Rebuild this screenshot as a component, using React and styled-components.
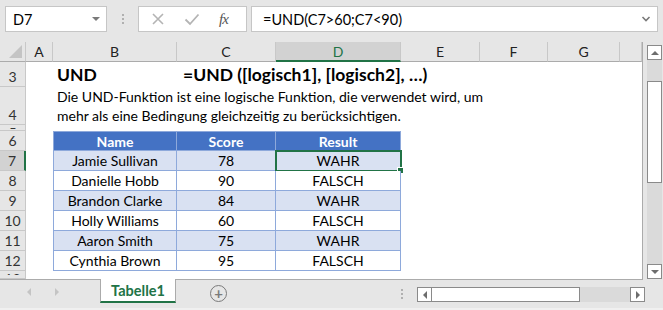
import React from "react";
import styled, { createGlobalStyle } from "styled-components";

const GlobalStyle = createGlobalStyle`
  html, body { margin: 0; padding: 0; background: #e6e6e6; }
  body { font-family: Lato, "Open Sans", sans-serif; }
`;

const GREEN = "#217346";
const TABLE_LINE = "#8ea9db";

const Window = styled.div`
  width: 663px;
  height: 310px;
  background: #e6e6e6;
  display: flex;
  flex-direction: column;
  overflow: hidden;
`;

// ---------- formula bar ----------
const FormulaBar = styled.div`
  height: 42px;
  box-sizing: border-box;
  padding: 6px 5px 10px 5px;
  display: flex;
  align-items: stretch;
`;

const NameBox = styled.div`
  width: 102px;
  box-sizing: border-box;
  background: #fff;
  border: 1px solid #c6c6c6;
  display: flex;
  align-items: center;
  justify-content: space-between;
  padding: 0 6px 0 7px;
  font-size: 14.5px;
  color: #000;
`;

const DownTri = styled.span`
  width: 0;
  height: 0;
  border-left: 4px solid transparent;
  border-right: 4px solid transparent;
  border-top: 4px solid #7a7a7a;
`;

const Grip = styled.div`
  width: 31px;
  display: flex;
  flex-direction: column;
  align-items: center;
  justify-content: center;
  gap: 2px;
  span {
    width: 2px;
    height: 2px;
    background: #b0b0b0;
  }
`;

const FxBox = styled.div`
  width: 109px;
  box-sizing: border-box;
  background: #fff;
  border: 1px solid #c6c6c6;
  display: flex;
  align-items: center;
  padding: 0 0 0 12px;
  gap: 19px;
  margin-right: 4px;
`;

const FxLabel = styled.span`
  font-family: "Liberation Serif", serif;
  font-style: italic;
  font-size: 15px;
  color: #555;
  letter-spacing: -1px;
`;

const FormulaInput = styled.div`
  flex: 1;
  background: #fff;
  border: 1px solid #c6c6c6;
  display: flex;
  align-items: center;
  justify-content: space-between;
  padding: 0 6px 0 11px;
  font-size: 14.5px;
  color: #000;
`;

// ---------- grid ----------
const Main = styled.div`
  display: flex;
  height: 238px;
`;

const Sheet = styled.div`
  width: 642px;
  display: grid;
  grid-template-columns: 26px 27px 124px 99px 125px 79px 68px 72px 1fr;
  grid-template-rows: 20px 25px 38px 6px repeat(7, 20px) 1fr;
  background: #fff;
  border-right: 1px solid #ababab;
  border-bottom: 1px solid #ababab;
  font-size: 14px;
`;

const Corner = styled.div`
  background: #e6e6e6;
  border-right: 1px solid #c8c8c8;
  border-bottom: 1px solid #ababab;
  position: relative;
  &::after {
    content: "";
    position: absolute;
    right: 3px;
    bottom: 3px;
    border-left: 13px solid transparent;
    border-bottom: 13px solid #c4c4c4;
  }
`;

const ColHead = styled.div`
  background: ${(p) => (p.$active ? "#d2d2d2" : "#e6e6e6")};
  color: ${(p) => (p.$active ? GREEN : "#222")};
  border-right: 1px solid #c8c8c8;
  border-bottom: ${(p) => (p.$active ? `2px solid ${GREEN}` : "1px solid #ababab")};
  display: flex;
  align-items: center;
  justify-content: center;
  font-size: 14px;
`;

const RowHead = styled.div`
  grid-column: 1;
  background: ${(p) => (p.$active ? "#d2d2d2" : "#e6e6e6")};
  border-right: ${(p) => (p.$active ? `2px solid ${GREEN}` : "1px solid #c8c8c8")};
  border-bottom: 1px solid #c8c8c8;
  color: #333;
  font-size: 14px;
  display: flex;
  justify-content: center;
  align-items: ${(p) => (p.$clip ? "flex-start" : "flex-end")};
  overflow: hidden;
  span {
    display: block;
    line-height: 16px;
    padding-bottom: ${(p) => (p.$clip ? "0" : "1px")};
    height: ${(p) => (p.$clip ? "4px" : "auto")};
    overflow: hidden;
  }
`;

const Title = styled.div`
  grid-row: 2;
  grid-column: ${(p) => p.$col};
  font-weight: 700;
  font-size: 17.5px;
  padding-left: ${(p) => p.$pad}px;
  white-space: nowrap;
  display: flex;
  align-items: center;
  color: #000;
`;

const Description = styled.div`
  grid-row: 3;
  grid-column: 3 / 8;
  padding-left: 4px;
  line-height: 19px;
  white-space: nowrap;
  color: #000;
`;

const TCell = styled.div`
  grid-row: ${(p) => p.$row};
  grid-column: ${(p) => p.$col};
  background: ${(p) => (p.$head ? "#4472c4" : p.$band ? "#d9e1f2" : "#fff")};
  color: ${(p) => (p.$head ? "#fff" : "#000")};
  font-weight: ${(p) => (p.$head ? 700 : 400)};
  border-top: ${(p) => (p.$head ? `1px solid ${TABLE_LINE}` : "none")};
  border-right: 1px solid ${TABLE_LINE};
  border-bottom: 1px solid ${TABLE_LINE};
  border-left: ${(p) => (p.$first ? `1px solid ${TABLE_LINE}` : "none")};
  display: flex;
  align-items: center;
  justify-content: center;
  position: relative;
  white-space: nowrap;
  ${(p) =>
    p.$selected &&
    `
    outline: 2px solid ${GREEN};
    outline-offset: -1px;
    &::after {
      content: "";
      position: absolute;
      right: -4px;
      bottom: -4px;
      width: 5px;
      height: 5px;
      background: ${GREEN};
      border: 1px solid #fff;
    }
  `}
`;

// ---------- scrollbars ----------
const VScrollCol = styled.div`
  flex: 1;
  display: flex;
  justify-content: center;
  padding: 3px 0 0 3px;
`;

const VTrack = styled.div`
  width: 15px;
  height: 234px;
  background: #dadada;
  display: flex;
  flex-direction: column;
  justify-content: space-between;
`;

const ScrollBtn = styled.div`
  width: 15px;
  height: 15px;
  box-sizing: border-box;
  background: #fff;
  border: 1px solid #8a8a8a;
  display: flex;
  align-items: center;
  justify-content: center;
`;

const Tri = styled.span`
  width: 0;
  height: 0;
  ${(p) =>
    p.$dir === "up"
      ? "border-left: 4px solid transparent; border-right: 4px solid transparent; border-bottom: 4px solid #6d6d6d;"
      : p.$dir === "down"
      ? "border-left: 4px solid transparent; border-right: 4px solid transparent; border-top: 4px solid #6d6d6d;"
      : p.$dir === "left"
      ? `border-top: 4px solid transparent; border-bottom: 4px solid transparent; border-right: 4px solid ${p.$color || "#6d6d6d"};`
      : `border-top: 4px solid transparent; border-bottom: 4px solid transparent; border-left: 4px solid ${p.$color || "#6d6d6d"};`}
`;

const VThumbArea = styled.div`
  flex: 1;
  padding-top: 21px;
`;

const VThumb = styled.div`
  height: 102px;
  background: #fff;
  border: 1px solid #8a8a8a;
  box-sizing: border-box;
`;

// ---------- sheet tabs ----------
const TabBar = styled.div`
  height: 30px;
  display: flex;
  align-items: flex-start;
  border-bottom: 2px solid #f0f0f0;
  box-sizing: border-box;
`;

const TabNav = styled.div`
  width: 100px;
  height: 24px;
  display: flex;
  align-items: center;
  gap: 24px;
  padding-left: 27px;
  box-sizing: border-box;
`;

const Tab = styled.div`
  width: 76px;
  height: 24px;
  box-sizing: border-box;
  background: #fff;
  border-left: 1px solid #ababab;
  border-right: 1px solid #ababab;
  border-bottom: 2px solid ${GREEN};
  margin-top: -1px;
  color: ${GREEN};
  font-weight: 700;
  font-size: 14.5px;
  display: flex;
  align-items: center;
  justify-content: center;
`;

const AddSheet = styled.div`
  width: 15px;
  height: 15px;
  margin: 5px 0 0 34px;
  border: 1.5px solid #7a7a7a;
  border-radius: 50%;
  display: flex;
  align-items: center;
  justify-content: center;
  color: #7a7a7a;
  font-size: 15px;
  line-height: 1;
  font-weight: 700;
`;

const BarGrip = styled(Grip)`
  width: auto;
  height: 14px;
  margin: 7px 0 0 174px;
`;

const HTrack = styled.div`
  width: 228px;
  height: 15px;
  margin: 7px 0 0 14px;
  background: #dadada;
  display: flex;
`;

const HThumb = styled.div`
  width: 148px;
  background: #fff;
  border: 1px solid #8a8a8a;
  border-left: none;
  box-sizing: border-box;
  margin-right: auto;
`;

const rows = [
  ["Jamie Sullivan", 78, "WAHR"],
  ["Danielle Hobb", 90, "FALSCH"],
  ["Brandon Clarke", 84, "WAHR"],
  ["Holly Williams", 60, "FALSCH"],
  ["Aaron Smith", 75, "WAHR"],
  ["Cynthia Brown", 95, "FALSCH"],
];

const cols = ["A", "B", "C", "D", "E", "F", "G", ""];

export default function App() {
  return (
    <>
      <GlobalStyle />
      <Window>
        <FormulaBar>
          <NameBox>
            D7
            <DownTri />
          </NameBox>
          <Grip>
            <span />
            <span />
            <span />
          </Grip>
          <FxBox>
            <svg width="14" height="14" viewBox="0 0 14 14">
              <path d="M2 2 L12 12 M12 2 L2 12" stroke="#b4b4b4" strokeWidth="1.6" />
            </svg>
            <svg width="16" height="14" viewBox="0 0 16 14">
              <path d="M1.5 7.5 L6 12 L14.5 2.5" stroke="#b4b4b4" strokeWidth="1.8" fill="none" />
            </svg>
            <FxLabel>fx</FxLabel>
          </FxBox>
          <FormulaInput>
            =UND(C7&gt;60;C7&lt;90)
            <svg width="10" height="8" viewBox="0 0 10 8">
              <path d="M1.5 2 L5 5.5 L8.5 2" stroke="#7a7a7a" strokeWidth="1.6" fill="none" />
            </svg>
          </FormulaInput>
        </FormulaBar>

        <Main>
          <Sheet>
            <Corner />
            {cols.map((c, i) => (
              <ColHead key={i} $active={c === "D"}>
                {c}
              </ColHead>
            ))}

            <RowHead style={{ gridRow: 2 }}><span>3</span></RowHead>
            <RowHead style={{ gridRow: 3 }}><span>4</span></RowHead>
            <RowHead style={{ gridRow: 4 }} $clip><span>5</span></RowHead>
            {[6, 7, 8, 9, 10, 11, 12].map((n, i) => (
              <RowHead key={n} style={{ gridRow: 5 + i }} $active={n === 7}>
                <span>{n}</span>
              </RowHead>
            ))}
            <RowHead style={{ gridRow: 12 }} $clip><span>13</span></RowHead>

            <Title $col={3} $pad={4}>UND</Title>
            <Title $col={4} $pad={6}>=UND ([logisch1], [logisch2], …)</Title>
            <Description>
              Die UND-Funktion ist eine logische Funktion, die verwendet wird, um
              <br />
              mehr als eine Bedingung gleichzeitig zu berücksichtigen.
            </Description>

            <TCell $row={5} $col={3} $head $first>Name</TCell>
            <TCell $row={5} $col={4} $head>Score</TCell>
            <TCell $row={5} $col={5} $head>Result</TCell>
            {rows.map(([name, score, res], i) => (
              <React.Fragment key={name}>
                <TCell $row={6 + i} $col={3} $first $band={i % 2 === 0}>{name}</TCell>
                <TCell $row={6 + i} $col={4} $band={i % 2 === 0}>{score}</TCell>
                <TCell $row={6 + i} $col={5} $band={i % 2 === 0} $selected={i === 0}>{res}</TCell>
              </React.Fragment>
            ))}
          </Sheet>

          <VScrollCol>
            <VTrack>
              <ScrollBtn><Tri $dir="up" /></ScrollBtn>
              <VThumbArea><VThumb /></VThumbArea>
              <ScrollBtn><Tri $dir="down" /></ScrollBtn>
            </VTrack>
          </VScrollCol>
        </Main>

        <TabBar>
          <TabNav>
            <Tri $dir="left" $color="#c4c4c4" />
            <Tri $dir="right" $color="#c4c4c4" />
          </TabNav>
          <Tab>Tabelle1</Tab>
          <AddSheet>+</AddSheet>
          <BarGrip>
            <span />
            <span />
            <span />
          </BarGrip>
          <HTrack>
            <ScrollBtn><Tri $dir="left" /></ScrollBtn>
            <HThumb />
            <ScrollBtn><Tri $dir="right" /></ScrollBtn>
          </HTrack>
        </TabBar>
      </Window>
    </>
  );
}
